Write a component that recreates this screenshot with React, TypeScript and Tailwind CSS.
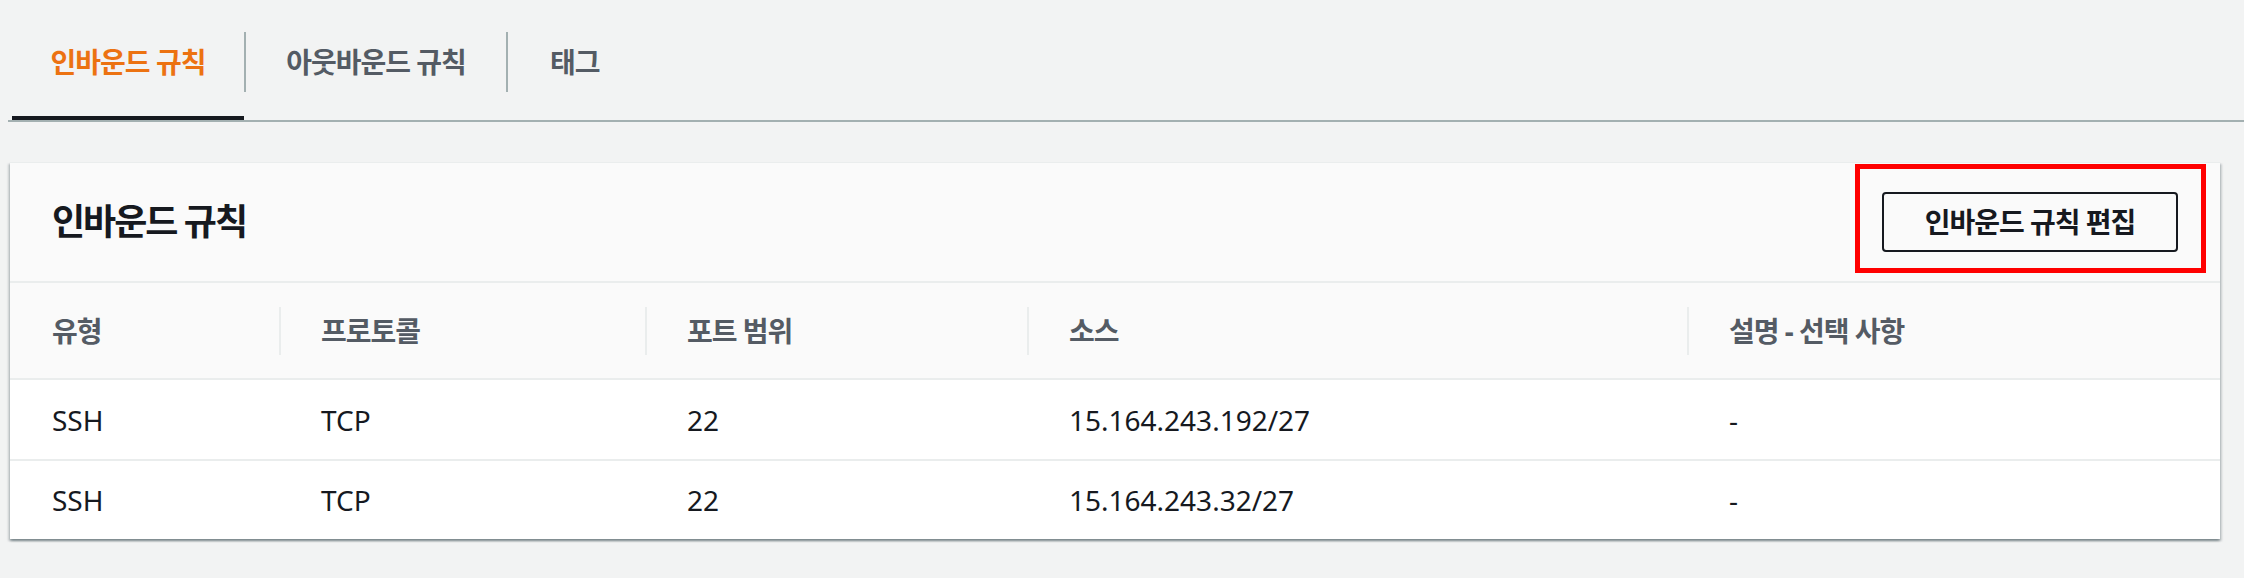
import React from 'react'

const tabs = [
  { label: '인바운드 규칙', width: 'w-[234px]', active: true },
  { label: '아웃바운드 규칙', width: 'w-[262px]', active: false },
  { label: '태그', width: 'px-[42px]', active: false, last: true },
]

const columns = ['유형', '프로토콜', '포트 범위', '소스', '설명 - 선택 사항']

const rules = [
  { type: 'SSH', protocol: 'TCP', port: '22', source: '15.164.243.192/27', desc: '-' },
  { type: 'SSH', protocol: 'TCP', port: '22', source: '15.164.243.32/27', desc: '-' },
]

export default function App() {
  return (
    <div className="min-h-[578px] bg-[#f2f3f3] pl-[8px] font-['Noto_Sans','Noto_Sans_CJK_KR',sans-serif] text-[#16191f]">
      {/* 탭 */}
      <div className="flex border-b-2 border-[#a3b0b1] pl-[4px]">
        {tabs.map((tab) => (
          <div key={tab.label} className={`flex flex-col h-[120px] ${tab.width}`}>
            <div
              className={`mt-[32px] h-[60px] flex items-center justify-center text-[28px] tracking-[-1px] font-bold ${
                tab.last ? '' : 'border-r-2 border-[#a3b0b1]'
              } ${tab.active ? 'text-[#ec7211]' : 'text-[#545b64]'}`}
            >
              {tab.label}
            </div>
            <div className="flex-1" />
            {tab.active && <div className="h-[4px] mr-[2px] bg-[#16191f]" />}
          </div>
        ))}
      </div>

      {/* 카드 */}
      <div className="mt-[40px] ml-[2px] mr-[24px] bg-white border-t border-[#eaeded] shadow-[0_2px_2px_0_rgba(0,28,36,0.3),2px_2px_2px_0_rgba(0,28,36,0.15),-2px_2px_2px_0_rgba(0,28,36,0.15)]">
        <div className="h-[120px] bg-[#fafafa] border-b-2 border-[#eaeded] flex items-center justify-between pl-[42px] pr-[42px]">
          <h2 className="text-[36px] tracking-[-2px] font-bold text-[#16191f]">인바운드 규칙</h2>
          <div className="relative">
            <button className="w-[296px] h-[60px] rounded-[4px] border-2 border-[#16191f] text-[28px] tracking-[-1px] font-bold text-[#16191f] flex items-center justify-center">
              인바운드 규칙 편집
            </button>
            <div className="absolute -left-[27px] -right-[28px] -top-[28px] -bottom-[21px] border-[5px] border-[#ff0000] pointer-events-none" />
          </div>
        </div>

        <div className="grid grid-cols-[269px_366px_382px_660px_1fr]">
          {columns.map((col, i) => (
            <div key={col} className="h-[97px] bg-[#fafafa] border-b-2 border-[#eaeded] flex items-center">
              <div
                className={`h-[48px] flex items-center text-[28px] tracking-[-1px] font-bold text-[#545b64] ${
                  i === 0 ? 'pl-[42px]' : 'border-l-2 border-[#eaeded] pl-[40px]'
                }`}
              >
                {col}
              </div>
            </div>
          ))}

          {rules.map((rule, r) =>
            [rule.type, rule.protocol, rule.port, rule.source, rule.desc].map((cell, c) => (
              <div
                key={`${r}-${c}`}
                className={`flex items-center pl-[42px] text-[28px] text-[#16191f] ${
                  r === 0 ? 'h-[81px] border-b-2 border-[#eaeded]' : 'h-[78px]'
                }`}
              >
                {cell}
              </div>
            )),
          )}
        </div>
      </div>
    </div>
  )
}
